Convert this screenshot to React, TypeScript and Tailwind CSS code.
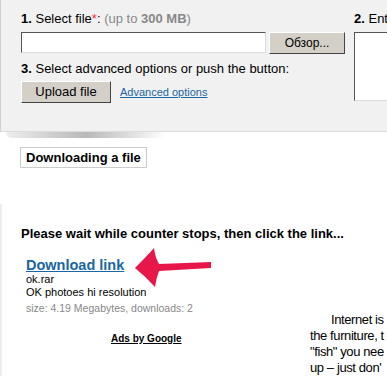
export default function App() {
  return (
    <div className="w-[387px] h-[384px] overflow-hidden bg-white font-['Liberation_Sans',Arial,sans-serif] text-black relative">
      {/* upload panel */}
      <div className="h-[132px] bg-[#f1f1f1] border-b border-[#dcdcdc] border-l border-l-[#d0d0d0] flex">
        <div className="pl-[20px] pt-[11px] w-[353px] shrink-0">
          <div className="text-[13px] leading-[16px]">
            <b>1.</b> Select file<span className="text-[#e33]">*</span>:{' '}
            <span className="text-[#888]">
              (up to <b>300 MB</b>)
            </span>
          </div>
          <div className="flex mt-[5px] gap-[3px]">
            <div className="w-[245px] h-[21px] shrink-0 bg-white border border-t-[#555] border-l-[#555] border-b-[#ddd] border-r-[#ddd]" />
            <button className="w-[76px] h-[22px] shrink-0 bg-[#d4d0c8] border border-t-white border-l-white border-b-[#444] border-r-[#444] text-[12px] leading-[18px]">
              Обзор...
            </button>
          </div>
          <div className="text-[13px] leading-[16px] mt-[7px]">
            <b>3.</b> Select advanced options or push the button:
          </div>
          <div className="flex items-center mt-[4px] gap-[9px]">
            <button className="w-[90px] h-[22px] bg-[#d4d0c8] border border-t-white border-l-white border-b-[#444] border-r-[#444] text-[13px] leading-[18px]">
              Upload file
            </button>
            <a className="text-[11px] text-[#1a66a3] underline">Advanced options</a>
          </div>
        </div>
        <div className="pt-[11px]">
          <div className="text-[13px] leading-[16px] whitespace-nowrap">
            <b>2.</b> Enter
          </div>
          <div className="mt-[5px] w-[60px] h-[69px] bg-white border border-t-[#555] border-l-[#555] border-b-[#ddd] border-r-[#ddd]" />
        </div>
      </div>
      {/* panel shadow */}
      <div className="h-[6px] ml-[6px] w-[160px] bg-gradient-to-r from-[#e8e8e8] via-[#9a9a9a] to-white rounded-b-full opacity-70" />

      <div className="flex pl-[20px] mt-[9px]">
        <div className="border border-[#cccccc] px-[5px] h-[21px] text-[13px] leading-[19px] font-bold">
          Downloading a file
        </div>
      </div>

      <div className="border-l-2 border-[#eeeeee] mt-[36px] pt-[22px]">
        <div className="pl-[19px] text-[13px] font-bold leading-[15px]">
          Please wait while counter stops, then click the link...
        </div>

        <div className="pl-[24px] mt-[17px]">
          <a className="block text-[14.5px] font-bold text-[#1a66a3] underline leading-[15px]">Download link</a>
          <div className="text-[11px] leading-[13px]">ok.rar</div>
          <div className="text-[11px] leading-[13px]">OK photoes hi resolution</div>
          <div className="text-[10.5px] leading-[13px] mt-[3px] text-[#888]">size: 4.19 Megabytes, downloads: 2</div>
        </div>

        <div className="flex mt-[-5px]">
          <div className="w-[289px] shrink-0 pl-[109px] pt-[15px]">
            <a className="text-[10px] font-bold underline leading-[12px]">Ads by Google</a>
          </div>
          <div className="text-[13px] leading-[16px] tracking-[-0.4px] whitespace-nowrap ml-[19px] pt-[2px]">
            <div className="pl-[21px]">Internet is</div>
            <div>the furniture, t</div>
            <div>"fish" you nee</div>
            <div>up – just don'</div>
          </div>
        </div>
      </div>

      <svg className="absolute left-[130px] top-[245px]" width="84" height="45" viewBox="0 0 84 45">
        <path d="M5 23 Q16 12 24 3 Q25 12 29 19 L81 17 L81 23 L29 26 Q26 34 25 42 Q15 31 5 23 Z" fill="#e8174a" />
      </svg>
    </div>
  );
}
